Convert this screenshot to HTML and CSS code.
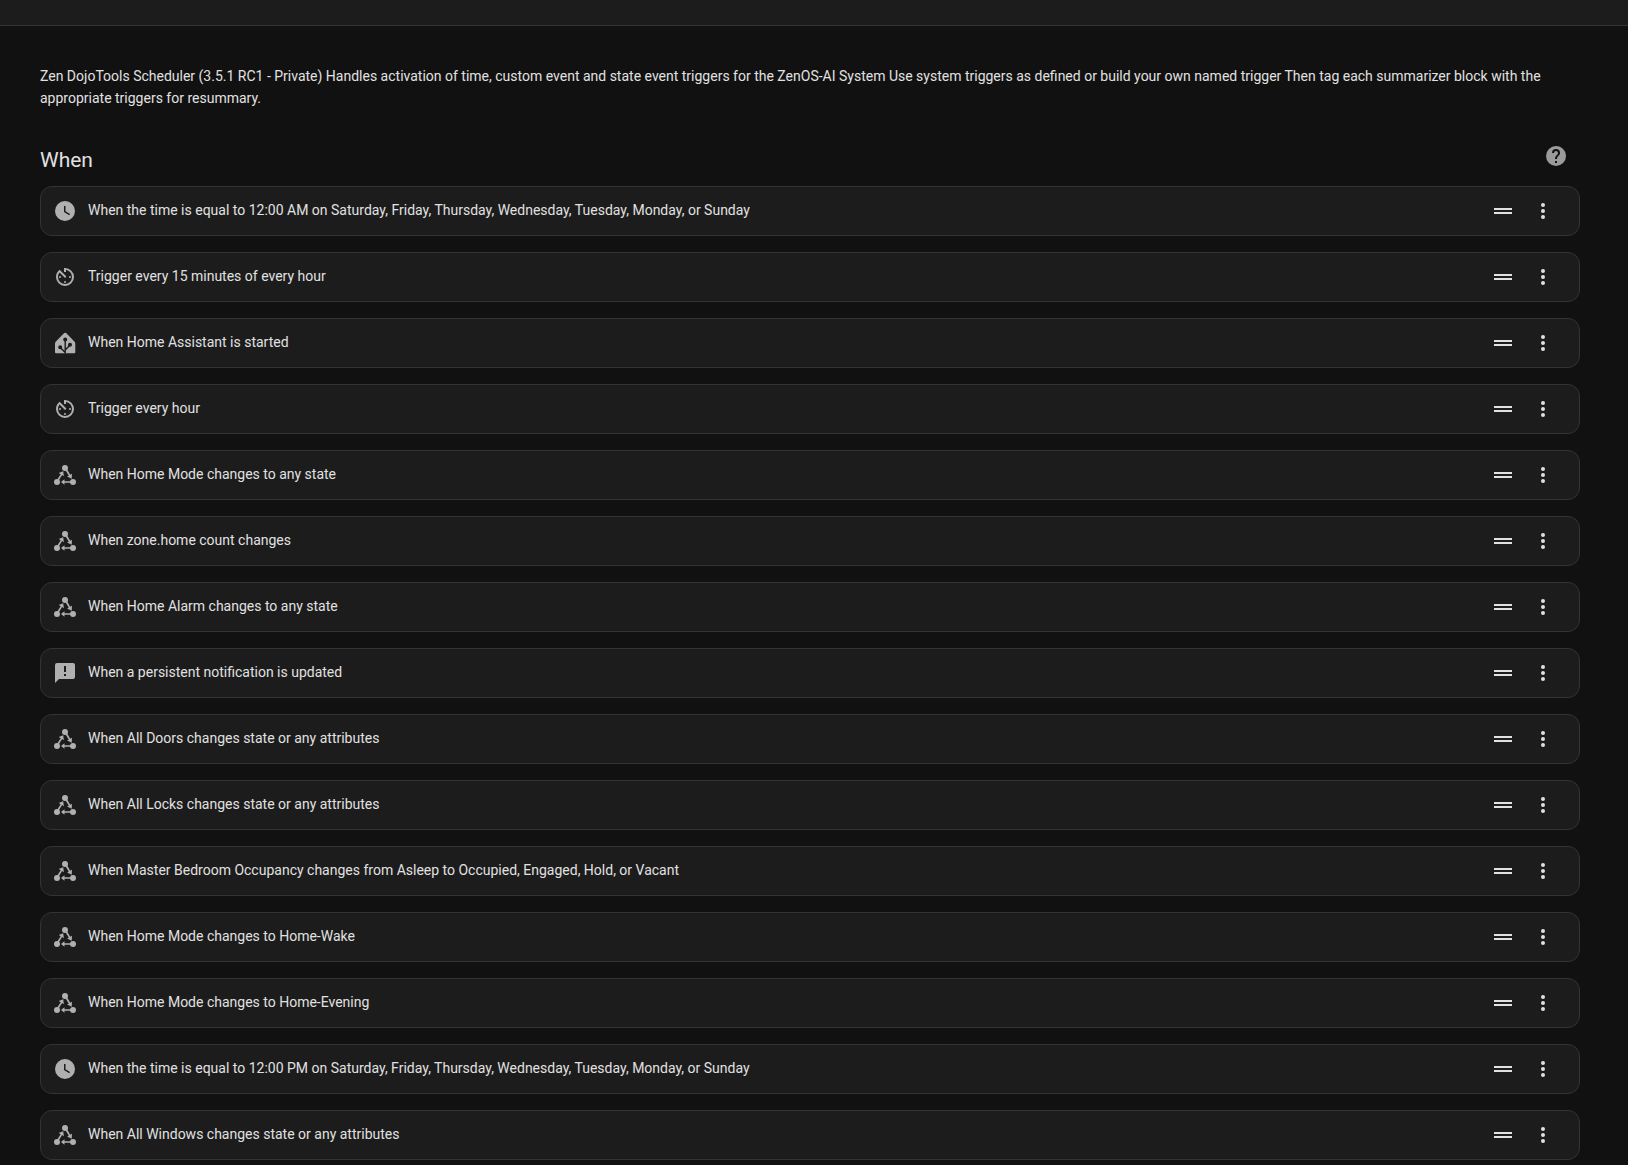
FILE: index.html
```html
<!DOCTYPE html>
<html lang="en">
<head>
  <meta charset="UTF-8">
  <meta name="viewport" content="width=device-width, initial-scale=1.0">
  <title>Zen DojoTools Scheduler</title>
  <link rel="stylesheet" href="styles.css">
</head>
<body>
  <!-- Icon sprite -->
  <svg class="sprite" aria-hidden="true">
    <symbol id="clock" viewBox="0 0 24 24">
      <path d="M12,2A10,10 0 0,0 2,12A10,10 0 0,0 12,22A10,10 0 0,0 22,12A10,10 0 0,0 12,2M16.2,16.2L11,13V7H12.5V12.2L17,14.9L16.2,16.2Z"/>
    </symbol>
    <symbol id="timer" viewBox="0 0 24 24">
      <path d="M11,17A1,1 0 0,0 12,18A1,1 0 0,0 13,17A1,1 0 0,0 12,16A1,1 0 0,0 11,17M11,3V7H13V5.08C16.39,5.57 19,8.47 19,12A7,7 0 0,1 12,19A7,7 0 0,1 5,12C5,10.32 5.59,8.78 6.58,7.58L12,13L13.41,11.59L6.61,4.79V4.81C4.42,6.45 3,9.05 3,12A9,9 0 0,0 12,21A9,9 0 0,0 21,12A9,9 0 0,0 12,3M18,12A1,1 0 0,0 17,11A1,1 0 0,0 16,12A1,1 0 0,0 17,13A1,1 0 0,0 18,12M6,12A1,1 0 0,0 7,13A1,1 0 0,0 8,12A1,1 0 0,0 7,11A1,1 0 0,0 6,12Z"/>
    </symbol>
    <symbol id="home" viewBox="0 0 24 24">
      <path d="M13.1 2.1L21.4 10.6Q22.3 11.5 22.3 12.8V21.2Q22.3 22.3 21.2 22.3H3.1Q2 22.3 2 21.2V12.8Q2 11.5 2.9 10.6L11.2 2.1Q12.15 1.2 13.1 2.1Z"/>
      <g class="cutout">
        <path d="M12.2 8.5V22.5M12.2 19L17 14M12.2 21.5L7.2 16.5"/>
        <circle cx="12.2" cy="8.4" r="1.3"/>
        <circle cx="17" cy="13.8" r="1.3"/>
        <circle cx="7.2" cy="16.3" r="1.3"/>
      </g>
    </symbol>
    <symbol id="state" viewBox="0 0 24 24">
      <circle cx="12" cy="5" r="3"/>
      <circle cx="4" cy="19" r="3"/>
      <circle cx="20" cy="19" r="3"/>
      <path d="M4.3 16.5L7.7 11.3L5.7 10L10.2 8.3L10.9 13.2L9.1 12.1L5.7 17.4ZM12.6 7.4L14.2 6.5L17.2 11.8L19 10.8L18.7 15.7L14.1 13.6L15.8 12.6ZM18 18.2V19.8H11.5V21.7L8 19L11.5 16.3V18.2Z"/>
    </symbol>
    <symbol id="alert" viewBox="0 0 24 24">
      <path d="M13,11H11V5H13M13,15H11V13H13M20,2H4A2,2 0 0,0 2,4V22L6,18H20A2,2 0 0,0 22,16V4C22,2.89 21.1,2 20,2Z"/>
    </symbol>
    <symbol id="help" viewBox="0 0 24 24">
      <path d="M15.07,11.25L14.17,12.17C13.45,12.89 13,13.5 13,15H11V14.5C11,13.39 11.45,12.39 12.17,11.67L13.41,10.41C13.78,10.05 14,9.55 14,9C14,7.89 13.1,7 12,7A2,2 0 0,0 10,9H8A4,4 0 0,1 12,5A4,4 0 0,1 16,9C16,9.88 15.64,10.67 15.07,11.25M13,19H11V17H13M12,2A10,10 0 0,0 2,12A10,10 0 0,0 12,22A10,10 0 0,0 22,12C22,6.47 17.5,2 12,2Z"/>
    </symbol>
    <symbol id="drag" viewBox="0 0 24 24">
      <path d="M21 11H3V9H21V11M21 13H3V15H21V13Z"/>
    </symbol>
    <symbol id="dots" viewBox="0 0 24 24">
      <path d="M12,16A2,2 0 0,1 14,18A2,2 0 0,1 12,20A2,2 0 0,1 10,18A2,2 0 0,1 12,16M12,10A2,2 0 0,1 14,12A2,2 0 0,1 12,14A2,2 0 0,1 10,12A2,2 0 0,1 12,10M12,4A2,2 0 0,1 14,6A2,2 0 0,1 12,8A2,2 0 0,1 10,6A2,2 0 0,1 12,4Z"/>
    </symbol>
  </svg>

  <header class="toolbar"></header>

  <main class="content">
    <p class="description">
      Zen DojoTools Scheduler (3.5.1 RC1 - Private) Handles activation of time, custom event and state event triggers for the ZenOS-AI System Use system triggers as defined or build your own named trigger Then tag each summarizer block with the appropriate triggers for resummary.
    </p>

    <div class="section-header">
      <h2 class="section-title">When</h2>
      <a class="help-link" href="#help" aria-label="Learn more about triggers"><svg class="icon"><use href="#help"/></svg></a>
    </div>

    <ul class="trigger-list" id="triggers"></ul>
  </main>

  <script src="script.js"></script>
</body>
</html>
```

FILE: styles.css
```css
* {
  margin: 0;
  padding: 0;
  box-sizing: border-box;
}

body {
  font-family: Roboto, 'Noto Sans', sans-serif;
  font-size: 14px;
  line-height: 22px;
  background: #111111;
  color: #e1e1e1;
}

.sprite {
  display: none;
}

.icon {
  display: block;
  width: 24px;
  height: 24px;
  fill: currentColor;
}

/* Lines cut out of a filled icon, in the card color */
.cutout {
  fill: #1c1c1c;
  stroke: #1c1c1c;
  stroke-width: 1.4;
}

.toolbar {
  height: 26px;
  background: #1c1c1c;
  border-bottom: 1px solid #333333;
}

.content {
  padding: 39px 48px 5px 40px;
}

.description {
  margin-bottom: 23px;
}

.section-header {
  display: flex;
  align-items: center;
  justify-content: space-between;
  height: 48px;
  padding-right: 12px;
  margin-bottom: 6px;
}

.section-title {
  font-size: 21px;
  font-weight: 400;
  line-height: 28px;
  padding-top: 8px;
}

.help-link {
  color: #9b9b9b;
}

.trigger-list {
  display: flex;
  flex-direction: column;
  gap: 16px;
  list-style: none;
}

.trigger {
  display: flex;
  align-items: center;
  height: 50px;
  padding: 0 12px;
  background: #1c1c1c;
  border: 1px solid #333333;
  border-radius: 12px;
}

.trigger-icon {
  color: #b0b0b0;
}

.trigger-label {
  flex: 1;
  margin-left: 11px;
  font-size: 14px;
  font-weight: 400;
  line-height: 20px;
  padding-bottom: 2px;
}

.icon-button {
  padding: 8px;
  background: none;
  border: none;
  color: #e1e1e1;
  cursor: pointer;
}

.drag-handle {
  cursor: grab;
}

.trigger-menu {
  margin-right: 4px;
}
```

FILE: script.js
```js
const triggers = [
  ['clock', 'When the time is equal to 12:00 AM on Saturday, Friday, Thursday, Wednesday, Tuesday, Monday, or Sunday'],
  ['timer', 'Trigger every 15 minutes of every hour'],
  ['home', 'When Home Assistant is started'],
  ['timer', 'Trigger every hour'],
  ['state', 'When Home Mode changes to any state'],
  ['state', 'When zone.home count changes'],
  ['state', 'When Home Alarm changes to any state'],
  ['alert', 'When a persistent notification is updated'],
  ['state', 'When All Doors changes state or any attributes'],
  ['state', 'When All Locks changes state or any attributes'],
  ['state', 'When Master Bedroom Occupancy changes from Asleep to Occupied, Engaged, Hold, or Vacant'],
  ['state', 'When Home Mode changes to Home-Wake'],
  ['state', 'When Home Mode changes to Home-Evening'],
  ['clock', 'When the time is equal to 12:00 PM on Saturday, Friday, Thursday, Wednesday, Tuesday, Monday, or Sunday'],
  ['state', 'When All Windows changes state or any attributes']
];

// Render trigger rows
document.getElementById('triggers').innerHTML = triggers.map(([icon, label]) => `
  <li class="trigger">
    <svg class="icon trigger-icon" aria-hidden="true"><use href="#${icon}"/></svg>
    <h3 class="trigger-label">${label}</h3>
    <button class="icon-button drag-handle" type="button" aria-label="Move"><svg class="icon"><use href="#drag"/></svg></button>
    <button class="icon-button trigger-menu" type="button" aria-label="Menu"><svg class="icon"><use href="#dots"/></svg></button>
  </li>
`).join('');
```
